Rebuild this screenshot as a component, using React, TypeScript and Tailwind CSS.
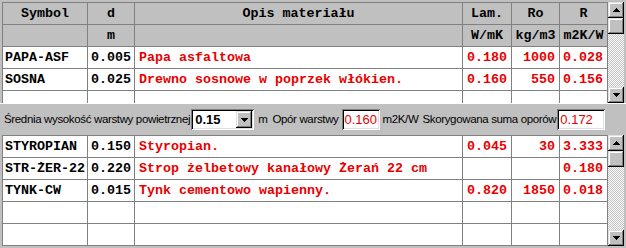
import React from "react";

const W = ["w-[85px]", "w-[47px]", "w-[328px]", "w-[49px]", "w-[48px]", "w-[48px]"];

const mono = "font-['Liberation_Mono','Courier_New',monospace] font-bold text-[13.33px] leading-none";
const raised =
  "bg-[#c0c0c0] shadow-[inset_-1px_-1px_0_#000,inset_1px_1px_0_#dfdfdf,inset_-2px_-2px_0_#808080,inset_2px_2px_0_#fff]";
const sunken =
  "bg-white shadow-[inset_1px_1px_0_#808080,inset_-1px_-1px_0_#fff,inset_2px_2px_0_#000,inset_-2px_-2px_0_#dfdfdf]";
const RED = "text-[#e80000]";

function Arrow({ up }: { up?: boolean }) {
  const rows = up ? [[3, 1], [2, 3], [1, 5], [0, 7]] : [[0, 7], [1, 5], [2, 3], [3, 1]];
  return (
    <svg width="7" height="4" viewBox="0 0 7 4" shapeRendering="crispEdges">
      {rows.map(([x, w], i) => (
        <rect key={i} x={x} y={i} width={w} height={1} fill="#000" />
      ))}
    </svg>
  );
}

function ScrollBar({ tall }: { tall?: boolean }) {
  return (
    <div
      className={`flex flex-col w-[16px] ${tall ? "h-[111px]" : "h-[101px]"} bg-[repeating-conic-gradient(#c0c0c0_0%_25%,#ffffff_0%_50%)] bg-[length:2px_2px]`}
    >
      <div className={`w-[16px] h-[16px] ${raised} flex items-center justify-center`}>
        <Arrow up />
      </div>
      <div className={`w-[16px] h-[16px] ${raised}`} />
      <div className="flex-1" />
      <div className={`w-[16px] h-[16px] ${raised} flex items-center justify-center`}>
        <Arrow />
      </div>
    </div>
  );
}

type Cell = { t: string; k: "sym" | "d" | "desc" | "num" | "head" };

function Row({ cells, header }: { cells: Cell[]; header?: boolean }) {
  return (
    <div className={`flex h-[22px] shrink-0 border-b border-[#808080] ${header ? "bg-[#c0c0c0]" : "bg-white"}`}>
      {cells.map((c, i) => {
        let cls = "";
        if (c.k === "head") cls = "justify-center text-black";
        else if (c.k === "sym") cls = "justify-start pl-[2px] text-black";
        else if (c.k === "d") cls = "justify-end pr-[3px] text-black";
        else if (c.k === "desc") cls = `justify-start pl-[4px] ${RED}`;
        else cls = `justify-end pr-[4px] ${RED}`;
        return (
          <div
            key={i}
            className={`${W[i]} h-full shrink-0 border-r border-[#808080] flex items-center whitespace-pre overflow-hidden ${mono} ${cls}`}
          >
            {c.t}
          </div>
        );
      })}
    </div>
  );
}

const dataRow = (a: string, b: string, c: string, d: string, e: string, f: string): Cell[] => [
  { t: a, k: "sym" },
  { t: b, k: "d" },
  { t: c, k: "desc" },
  { t: d, k: "num" },
  { t: e, k: "num" },
  { t: f, k: "num" },
];

const headRow = (arr: string[]): Cell[] => arr.map((t) => ({ t, k: "head" as const }));

export default function App() {
  return (
    <div className="w-[626px] h-[248px] bg-[#c0c0c0] overflow-hidden pt-[2px] px-[2px] flex flex-col">
      {/* upper grid */}
      <div className="flex h-[101px] shrink-0">
        <div className="w-[606px] h-[101px] border-l border-t border-[#808080] flex flex-col overflow-hidden bg-white">
          <Row header cells={headRow(["Symbol", "d", "Opis materiału", "Lam.", "Ro", "R"])} />
          <Row header cells={headRow(["", "m", "", "W/mK", "kg/m3", "m2K/W"])} />
          <Row cells={dataRow("PAPA-ASF", "0.005", "Papa asfaltowa", "0.180", "1000", "0.028")} />
          <Row cells={dataRow("SOSNA", "0.025", "Drewno sosnowe w poprzek włókien.", "0.160", "550", "0.156")} />
          <Row cells={dataRow("", "", "", "", "", "")} />
        </div>
        <ScrollBar />
      </div>

      {/* middle panel */}
      <div className="h-[32px] shrink-0 -mx-[2px] pl-[4px] flex items-center border-t border-white font-['Liberation_Sans',Arial,sans-serif] text-[11.5px] tracking-[-0.35px] text-black">
        <span>Średnia wysokość warstwy powietrznej</span>
        <div className={`ml-[1px] w-[63px] h-[21px] ${sunken} flex items-center pl-[4px] pr-[2px] tracking-normal`}>
          <span className="flex-1 font-bold text-[13px]">0.15</span>
          <div className={`w-[16px] h-[17px] ${raised} flex items-center justify-center`}>
            <Arrow />
          </div>
        </div>
        <span className="ml-[4px]">m</span>
        <span className="ml-[5px]">Opór warstwy</span>
        <div className={`ml-[3px] w-[38px] h-[21px] ${sunken} flex items-center pl-[3px] text-[13px] tracking-normal ${RED}`}>0.160</div>
        <span className="ml-[3px]">m2K/W</span>
        <span className="ml-[4px]">Skorygowana suma oporów</span>
        <div className={`ml-[1px] w-[48px] h-[21px] ${sunken} flex items-center pl-[3px] text-[13px] tracking-normal ${RED}`}>0.172</div>
      </div>

      {/* lower grid */}
      <div className="flex h-[111px] shrink-0">
        <div className="w-[606px] h-[111px] border-l border-t border-[#808080] flex flex-col overflow-hidden bg-white">
          <Row cells={dataRow("STYROPIAN", "0.150", "Styropian.", "0.045", "30", "3.333")} />
          <Row cells={dataRow("STR-ŻER-22", "0.220", "Strop żelbetowy kanałowy Żerań 22 cm", "", "", "0.180")} />
          <Row cells={dataRow("TYNK-CW", "0.015", "Tynk cementowo wapienny.", "0.820", "1850", "0.018")} />
          <Row cells={dataRow("", "", "", "", "", "")} />
          <Row cells={dataRow("", "", "", "", "", "")} />
        </div>
        <ScrollBar tall />
      </div>
    </div>
  );
}
